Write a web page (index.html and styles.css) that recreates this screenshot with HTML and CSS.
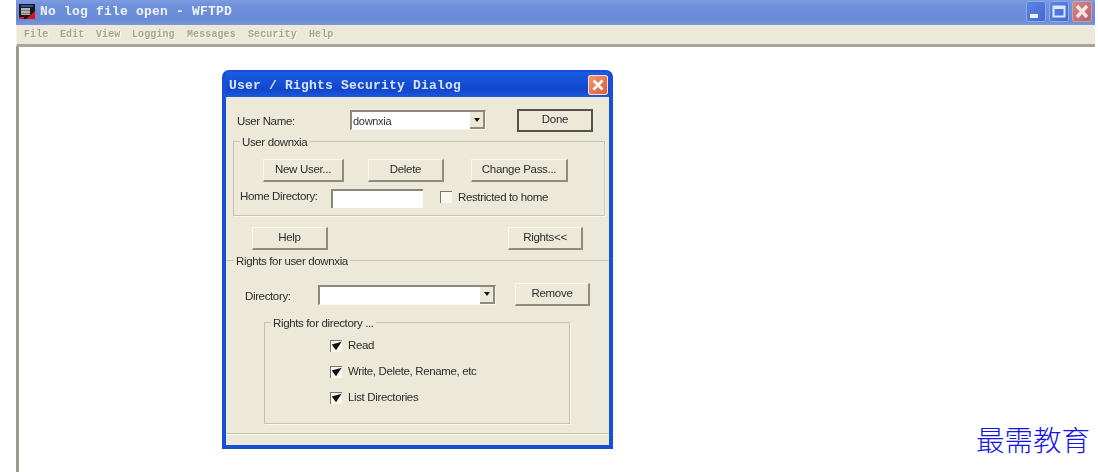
FILE: index.html
```html
<!DOCTYPE html>
<html lang="en">
<head>
<meta charset="utf-8">
<title>WFTPD</title>
<link rel="stylesheet" href="styles.css">
</head>
<body>
<div class="window">
  <div class="titlebar">
    <svg class="appicon" width="18" height="17" viewBox="0 0 18 17">
      <rect x="1" y="1" width="16" height="15" fill="#16181e"/>
      <rect x="3" y="2" width="12" height="2" fill="#3a4aa8"/>
      <rect x="3" y="5" width="9" height="7" fill="#b4b4ac"/>
      <rect x="3" y="7" width="9" height="1" fill="#77776f"/>
      <rect x="3" y="10" width="9" height="1" fill="#77776f"/>
      <path d="M8 16 L17 8 V16 Z" fill="#dc1414"/>
      <rect x="1" y="14" width="5" height="2" fill="#c82020"/>
    </svg>
    <span class="wintitle">No log file open - WFTPD</span>
    <div class="caps">
      <span class="cap"><svg width="20" height="21" viewBox="0 0 20 21"><rect x="4" y="13" width="8" height="4" fill="#f2f4fb"/></svg></span>
      <span class="cap"><svg width="20" height="21" viewBox="0 0 20 21"><rect x="4.5" y="5.5" width="11" height="10" fill="none" stroke="#dfe6f8" stroke-width="2"/><rect x="4" y="5" width="12" height="3" fill="#dfe6f8"/></svg></span>
      <span class="cap cap-close"><svg width="20" height="21" viewBox="0 0 20 21"><path d="M5 5 L15 16 M15 5 L5 16" stroke="#f4e4e4" stroke-width="3.4"/></svg></span>
    </div>
  </div>
  <div class="menubar">
    <span class="menu m1">File</span><span class="menu m1">Edit</span><span class="menu m1">View</span><span class="menu m2">Logging</span><span class="menu m3">Messages</span><span class="menu m3">Security</span><span class="menu m1">Help</span>
  </div>
  <div class="client">
    <div class="dialog">
      <div class="dlg-title">
        <span class="dlg-caption">User / Rights Security Dialog</span>
        <span class="dlg-close"><svg width="18" height="18" viewBox="0 0 18 18"><path d="M4.5 4.5 L13.5 13.5 M13.5 4.5 L4.5 13.5" stroke="#fff" stroke-width="2.6"/></svg></span>
      </div>
      <div class="dlg-body">
        <div class="row-user">
          <span class="lbl w-user">User Name:</span>
          <div class="combo w-combo1"><span class="combo-text">downxia</span><span class="arrow"></span></div>
          <button class="btn btn-default w76">Done</button>
        </div>
        <div class="group group-user">
          <span class="legend">User downxia</span>
          <div class="row-actions">
            <button class="btn w81">New User...</button>
            <button class="btn w76">Delete</button>
            <button class="btn w97">Change Pass...</button>
          </div>
          <div class="row-home">
            <span class="lbl w-home">Home Directory:</span>
            <div class="input"></div>
            <label class="check check-home"><span class="box"></span><span class="lbl">Restricted to home</span></label>
          </div>
        </div>
        <div class="row-help">
          <button class="btn w76">Help</button>
          <button class="btn w75">Rights&lt;&lt;</button>
        </div>
        <div class="group-rights">
          <span class="legend legend-rights">Rights for user downxia</span>
          <div class="row-dir">
            <span class="lbl w-dir">Directory:</span>
            <div class="combo w-combo2"><span class="arrow"></span></div>
            <button class="btn w75">Remove</button>
          </div>
          <div class="group group-dir">
            <span class="legend">Rights for directory ...</span>
            <label class="check"><span class="box"><svg width="11" height="11" viewBox="0 0 11 11"><path d="M2 4 L5 8 L9 2 Z" fill="#111" stroke="#111" stroke-width="1.4"/></svg></span><span class="lbl">Read</span></label>
            <label class="check"><span class="box"><svg width="11" height="11" viewBox="0 0 11 11"><path d="M2 4 L5 8 L9 2 Z" fill="#111" stroke="#111" stroke-width="1.4"/></svg></span><span class="lbl">Write, Delete, Rename, etc</span></label>
            <label class="check"><span class="box"><svg width="11" height="11" viewBox="0 0 11 11"><path d="M2 4 L5 8 L9 2 Z" fill="#111" stroke="#111" stroke-width="1.4"/></svg></span><span class="lbl">List Directories</span></label>
          </div>
        </div>
      </div>
    </div>
    <div class="watermark">最需教育</div>
  </div>
</div>
</body>
</html>
```
FILE: styles.css
```css
* { box-sizing: border-box; }
html, body { margin: 0; padding: 0; background: #fff; }
body { width: 1098px; height: 472px; overflow: hidden; }

.window { margin-left: 16px; width: 1079px; height: 472px; display: flex; flex-direction: column; }

.titlebar {
  height: 25px; flex: none; display: flex; align-items: center; padding: 0 3px 2px 2px;
  background: linear-gradient(#7f9cdf 0%, #6f90dc 20%, #6a8ad6 80%, #7b97da 100%);
  filter: blur(.6px);
}
.appicon { flex: none; }
.wintitle {
  margin-left: 4px; font: bold 13px "Liberation Mono", monospace; letter-spacing: .2px; color: #eef2fb;
}
.caps { margin-left: auto; display: flex; gap: 3px; }
.cap {
  width: 20px; height: 21px; border-radius: 3px; display: block;
  background: linear-gradient(135deg, #5f86e4, #3f68d4); box-shadow: inset 0 0 0 1px #8fa9e6;
}
.cap svg { display: block; }
.cap-close { background: linear-gradient(135deg, #d08a8a, #b85c68); box-shadow: inset 0 0 0 1px #c9a0aa; }

.menubar {
  height: 22px; flex: none; display: flex; align-items: center; padding: 0 0 1px 7px; gap: 12px;
  background: #ece9d8; border-bottom: 3px solid #a8a69c; border-left: 1px solid #f4f2e8;
  filter: blur(.6px);
}
.menu { font: bold 10px "Liberation Mono", monospace; letter-spacing: .1px; color: #a5a391; text-shadow: 1px 1px 0 #fbfaf2; }
.m1 { width: 24px; }
.m2 { width: 43px; }
.m3 { width: 49px; }

.client { flex: 1; position: relative; background: #fff; border-left: 3px solid #9a9a94; }

.dialog {
  position: absolute; left: 203px; top: 23px; width: 391px; height: 379px;
  background: #1650d8; border-radius: 7px 7px 0 0; padding: 2px 4px 4px; display: flex; flex-direction: column;
  filter: blur(.6px);
}
.dlg-title {
  height: 25px; flex: none; display: flex; align-items: center; justify-content: space-between; padding: 0 1px 0 3px;
  background: linear-gradient(#1a5ce0, #1246cc 70%, #1a58dc);
}
.dlg-caption { font: bold 13px "Liberation Mono", monospace; letter-spacing: .2px; color: #d8e4fb; position: relative; top: 1px; }
.dlg-close {
  width: 20px; height: 20px; border-radius: 3px; display: flex; align-items: center; justify-content: center;
  background: linear-gradient(135deg, #ec9a78, #dd5a34); box-shadow: inset 0 0 0 1px #f6e0d4;
}
.dlg-body { flex: 1; background: #ece9d8; font: 11.5px "Liberation Sans", sans-serif; color: #222; }

.lbl { font-size: 11.5px; letter-spacing: -.36px; color: #2c2c2c; white-space: nowrap; }

.btn {
  height: 23px; padding: 0 0 2px; font: 11.5px "Liberation Sans", sans-serif; letter-spacing: -.3px; color: #2c2c2c;
  background: #ece9d8; border: 0; border-top: 1px solid #f8f7ee; border-left: 1px solid #f8f7ee;
  border-right: 2px solid #8e8c7e; border-bottom: 2px solid #8e8c7e;
}
.btn-default { border: 2px solid #55544a; }
.w75 { width: 75px; }
.w76 { width: 76px; }
.w81 { width: 81px; }
.w97 { width: 97px; }

.combo {
  height: 20px; display: flex; align-items: center; justify-content: space-between;
  background: #fff; border: 1px solid #f8f7ee; border-top: 2px solid #8a887c; border-left: 2px solid #8a887c;
}
.combo-text { font-size: 11px; letter-spacing: -.3px; color: #333; padding-left: 1px; }
.arrow {
  margin-left: auto; width: 15px; height: 17px; background: #ece9d8; border-right: 2px solid #8e8c7e; border-bottom: 2px solid #8e8c7e;
  display: flex; align-items: center; justify-content: center;
}
.arrow::after { content: ""; border: 3.5px solid transparent; border-top: 4px solid #111; border-bottom: 0; }
.w-combo1 { width: 136px; margin-right: 31px; }
.w-combo2 { width: 178px; margin-right: 19px; }

.row-user { display: flex; align-items: center; height: 24px; margin-top: 11px; padding-left: 11px; }
.w-user { width: 113px; position: relative; top: 1px; }

.group { position: relative; border: 1px solid #c6c3b2; box-shadow: 1px 1px 0 #f8f7ee; }
.legend {
  position: absolute; left: 6px; top: -6px; padding: 0 2px; background: #ece9d8; font-size: 11.5px; letter-spacing: -.36px; color: #2c2c2c; white-space: nowrap;
}
.group-user { margin: 9px 0 0 7px; width: 372px; height: 75px; }
.row-actions { display: flex; margin: 17px 0 0 29px; }
.row-actions .btn + .btn { margin-left: 24px; }
.row-actions .btn + .btn + .btn { margin-left: 27px; }
.row-home { display: flex; align-items: center; height: 19px; margin: 7px 0 0 6px; }
.w-home { width: 91px; position: relative; top: -3px; }
.input { width: 92px; height: 19px; background: #fff; border-top: 2px solid #8a887c; border-left: 2px solid #8a887c; }

.check { display: flex; align-items: center; height: 13px; }
.check .lbl { position: relative; top: -2px; }
.check .box { position: relative; top: -1px; }
.check-home { margin-left: 17px; }
.check-home .box { top: -2px; }
.box { width: 12px; height: 12px; margin-right: 6px; background: #f8f7f0; border-top: 1px solid #77756a; border-left: 1px solid #77756a; display: block; flex: none; }
.box svg { display: block; }

.row-help { display: flex; justify-content: space-between; margin: 11px 0 0 26px; width: 331px; }

.group-rights { position: relative; margin-top: 10px; height: 174px; border-top: 1px solid #c6c3b2; border-bottom: 1px solid #c6c3b2; box-shadow: 0 1px 0 #f8f7ee; }
.legend-rights { left: 8px; }
.row-dir { display: flex; align-items: center; height: 23px; margin-top: 22px; padding-left: 19px; }
.w-dir { width: 73px; position: relative; top: 1px; }
.group-dir { margin: 16px 0 0 38px; width: 306px; height: 102px; padding: 17px 0 0 65px; display: flex; flex-direction: column; gap: 13px; }

.watermark {
  position: absolute; left: 957px; top: 377px; font: 300 28.5px/30px "Noto Sans CJK SC", sans-serif; color: #1414e6; white-space: nowrap;
}
```
